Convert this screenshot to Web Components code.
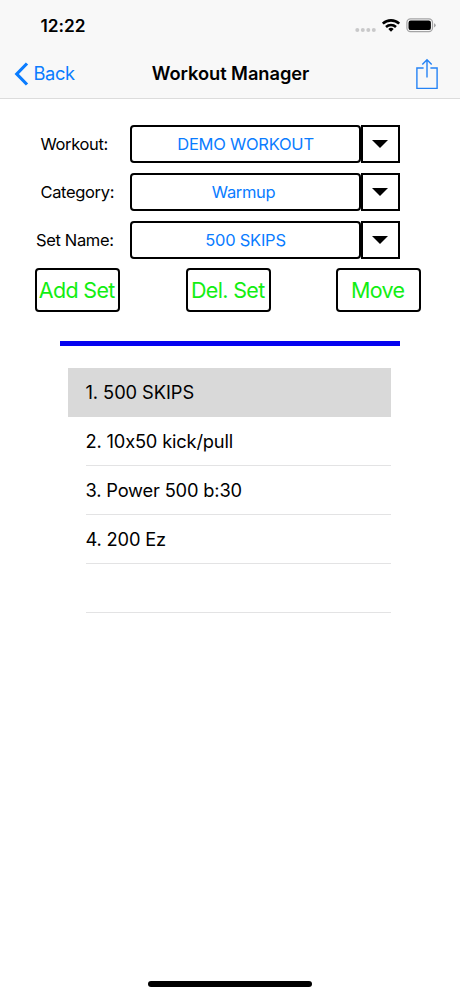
<!DOCTYPE html>
<html lang="en">
<head>
<meta charset="utf-8">
<title>Workout Manager</title>
<style>
    html, body {
        margin: 0;
        height: 100%;
        background: #fff;
    }
    body {
        font-family: Inter, "Liberation Sans", sans-serif;
        font-feature-settings: "calt" 0;
        overflow: hidden;
    }
</style>
</head>
<body>
<workout-app></workout-app>

<script>
class StatusBar extends HTMLElement {

    constructor() {
        super();
        this.attachShadow({mode: 'open'});
        this.render();
    }

    render() {
        this.shadowRoot.innerHTML =
        `
        <style>
            :host {
                display: flex;
                justify-content: space-between;
                height: 50px;
                box-sizing: border-box;
                padding: 14px 24px 0 40.5px;
            }
            .time {
                font-size: 17.3px;
                line-height: 24px;
                font-weight: 600;
            }
            .icons {
                display: flex;
            }
            svg {
                display: block;
            }
        </style>
        <div class="time"><slot></slot></div>
        <div class="icons">
            <svg width="82" height="22" viewBox="354 14 82 22">
                <g fill="#c9c9ca">
                    <circle cx="357.3" cy="30" r="2"/>
                    <circle cx="362.8" cy="30" r="2"/>
                    <circle cx="368.3" cy="30" r="2"/>
                    <circle cx="373.8" cy="30" r="2"/>
                </g>
                <g fill="none" stroke="#000" stroke-width="2.6">
                    <path d="M382.8 23.6a12 12 0 0 1 16.4 0"/>
                    <path d="M386 27a7.4 7.4 0 0 1 10 0"/>
                </g>
                <path d="M391 31.8l-2.7-2.7a4 4 0 0 1 5.4 0z"/>
                <rect x="406.9" y="18.9" width="25.6" height="12.8" rx="3.6" fill="none" stroke="#a4a4a5" stroke-width="1.2"/>
                <rect x="408.5" y="20.5" width="22.4" height="9.6" rx="2.2"/>
                <path d="M434 23.2q1.7.6 1.7 2.1t-1.7 2.1z" fill="#a4a4a5"/>
            </svg>
        </div>
        `;
    }
}

class NavBar extends HTMLElement {

    constructor() {
        super();
        this.attachShadow({mode: 'open'});
        this.render();
    }

    render() {
        this.shadowRoot.innerHTML =
        `
        <style>
            :host {
                display: grid;
                grid-template-columns: 1fr auto 1fr;
                align-items: center;
                height: 48px;
                box-sizing: border-box;
                padding: 0 21px 0 14px;
                font-size: 18.3px;
                line-height: 24px;
            }
            .back {
                display: flex;
                align-items: center;
                gap: 4.5px;
                color: #0a7cff;
            }
            .back span {
                margin-bottom: 2px;
            }
            .title {
                font-weight: 600;
                letter-spacing: -0.05px;
                margin: 0 -4px 2px 4px;
            }
            .share {
                justify-self: end;
            }
            svg {
                display: block;
            }
        </style>
        <div class="back">
            <svg width="15" height="24" viewBox="0 0 15 24" fill="none" stroke="#0a7cff" stroke-width="3.2"><path d="M13 1.5L2.8 12L13 22.5"/></svg>
            <span><slot name="back"></slot></span>
        </div>
        <div class="title"><slot></slot></div>
        <div class="share">
            <svg width="24" height="32" viewBox="0 0 24 32" fill="none" stroke="#2583f5" stroke-width="1.4"><path d="M8.6 10H1.9V30.4H22.1V10H15.4M12 19.4V2M7.3 6.5L12 1.8L16.7 6.5"/></svg>
        </div>
        `;
    }
}

class PickerRow extends HTMLElement {

    constructor() {
        super();
        this.attachShadow({mode: 'open'});
        this.render();
    }

    render() {
        this.shadowRoot.innerHTML =
        `
        <style>
            :host {
                display: flex;
                align-items: center;
                height: 38.4px;
                font-size: 16.5px;
                line-height: 22px;
            }
            .label {
                width: 130px;
                box-sizing: border-box;
                padding-left: var(--label-inset, 40.5px);
                white-space: nowrap;
            }
            .value {
                width: 231px;
                height: 100%;
                box-sizing: border-box;
                border: 2.4px solid #000;
                border-radius: 4px;
                display: flex;
                align-items: center;
                justify-content: center;
                color: #0a7cff;
            }
            .arrow {
                width: 38.5px;
                height: 100%;
                box-sizing: border-box;
                border: 2px solid #000;
                display: flex;
                align-items: center;
                justify-content: center;
            }
            svg {
                display: block;
                margin-right: 1px;
            }
        </style>
        <div class="label"><slot name="label"></slot></div>
        <div class="value"><span><slot></slot></span></div>
        <div class="arrow">
            <svg width="16" height="8" viewBox="0 0 16 8"><path d="M0 0H16L8 8z"/></svg>
        </div>
        `;
    }
}

class SetButton extends HTMLElement {

    constructor() {
        super();
        this.attachShadow({mode: 'open'});
        this.render();
    }

    render() {
        this.shadowRoot.innerHTML =
        `
        <style>
            :host {
                display: flex;
                align-items: center;
                justify-content: center;
                width: 85px;
                height: 44px;
                box-sizing: border-box;
                border: 2px solid #000;
                border-radius: 4px;
                color: #12ee12;
                font-size: 21.5px;
                line-height: 28px;
                white-space: nowrap;
            }
            span {
                margin-right: 1.5px;
            }
        </style>
        <span><slot></slot></span>
        `;
    }
}

class SetItem extends HTMLElement {

    constructor() {
        super();
        this.attachShadow({mode: 'open'});
        this.render();
    }

    render() {
        this.shadowRoot.innerHTML =
        `
        <style>
            :host {
                display: block;
                height: 49px;
                box-sizing: border-box;
                padding-left: 17.5px;
                font-size: 18.3px;
            }
            :host([selected]) {
                background: #d9d9d9;
            }
            .line {
                height: 49px;
                box-sizing: border-box;
                border-bottom: 1px solid #e3e3e4;
                line-height: 49px;
            }
            :host([selected]) .line {
                border-color: transparent;
            }
        </style>
        <div class="line"><slot></slot></div>
        `;
    }
}

class WorkoutApp extends HTMLElement {

    constructor() {
        super();
        this.attachShadow({mode: 'open'});
        this.render();
    }

    render() {
        this.shadowRoot.innerHTML =
        `
        <style>
            :host {
                display: flex;
                flex-direction: column;
                height: 996px;
                width: 460px;
                color: #000;
            }
            header {
                background: #f8f8f8;
                border-bottom: 1px solid #dcdcdc;
            }
            .pickers {
                display: flex;
                flex-direction: column;
                gap: 9.4px;
                height: 134px;
                margin-top: 26px;
            }
            .buttons {
                display: flex;
                gap: 65px;
                padding-left: 35px;
                margin-top: 9px;
            }
            .buttons :nth-child(2) {
                margin-left: 1px;
            }
            .rule {
                height: 5px;
                margin: 29px 60px 0;
                background: #0502f0;
            }
            .list {
                margin: 22px 69.5px 0 68px;
            }
            .home {
                width: 164px;
                height: 6px;
                border-radius: 3px;
                background: #000;
                margin: auto auto 9px;
            }
            picker-row span {
                letter-spacing: -0.35px;
            }
            picker-row .caps {
                letter-spacing: -0.25px;
            }
            picker-row .low {
                margin-right: 4px;
            }
            set-button {
                letter-spacing: -0.65px;
            }
            set-item {
                letter-spacing: -0.18px;
            }
            set-item[selected] {
                letter-spacing: -0.08px;
            }
            [slot=back] {
                letter-spacing: -0.4px;
            }
        </style>
        <header>
            <status-bar>12:22</status-bar>
            <nav-bar><span slot="back">Back</span>Workout Manager</nav-bar>
        </header>
        <div class="pickers">
            <picker-row><span slot="label">Workout:</span><span class="caps">DEMO WORKOUT</span></picker-row>
            <picker-row><span slot="label">Category:</span><span class="low">Warmup</span></picker-row>
            <picker-row style="--label-inset: 36px"><span slot="label">Set Name:</span><span class="caps">500 SKIPS</span></picker-row>
        </div>
        <div class="buttons">
            <set-button>Add Set</set-button>
            <set-button>Del. Set</set-button>
            <set-button>Move</set-button>
        </div>
        <div class="rule"></div>
        <div class="list">
            <set-item selected>1. 500 SKIPS</set-item>
            <set-item>2. 10x50 kick/pull</set-item>
            <set-item>3. Power 500 b:30</set-item>
            <set-item>4. 200 Ez</set-item>
            <set-item></set-item>
        </div>
        <div class="home"></div>
        `;
    }
}

customElements.define('status-bar', StatusBar);
customElements.define('nav-bar', NavBar);
customElements.define('picker-row', PickerRow);
customElements.define('set-button', SetButton);
customElements.define('set-item', SetItem);
customElements.define('workout-app', WorkoutApp);
</script>
</body>
</html>
